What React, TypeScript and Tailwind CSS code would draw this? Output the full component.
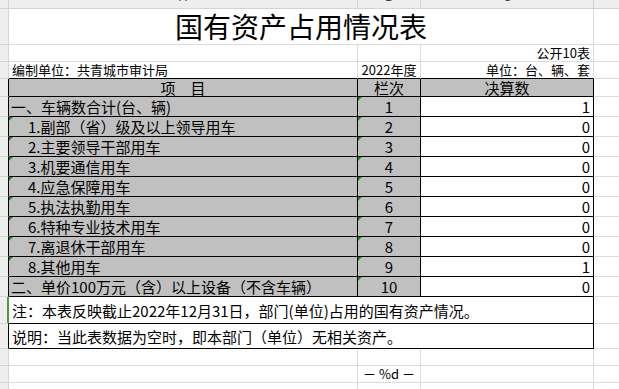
import React from "react";

const FONT = { fontFamily: '"Noto Sans CJK SC", "Noto Sans", sans-serif' };

function Tri() {
  return (
    <svg className="absolute left-0 top-0" width="4" height="4" viewBox="0 0 4 4">
      <polygon points="0,0 4,0 0,4" fill="#1f8a1f" />
    </svg>
  );
}

const GRID = "border-[#dcdcdc]";

function RowHeader({ black }: { black?: boolean }) {
  return (
    <div
      className={`w-[9px] shrink-0 h-full bg-[#eeeeee] border-b border-b-[#d6d6d6] border-r ${
        black ? "border-r-black" : "border-r-[#d6d6d6]"
      }`}
    />
  );
}

function DCell() {
  return <div className={`flex-1 h-full border-b ${GRID}`} />;
}

type DataRow = { label: string; indent: boolean; no: string; val: string; tri: boolean };

const rows: DataRow[] = [
  { label: "一、车辆数合计(台、辆)", indent: false, no: "1", val: "1", tri: false },
  { label: "1.副部（省）级及以上领导用车", indent: true, no: "2", val: "0", tri: true },
  { label: "2.主要领导干部用车", indent: true, no: "3", val: "0", tri: true },
  { label: "3.机要通信用车", indent: true, no: "4", val: "0", tri: true },
  { label: "4.应急保障用车", indent: true, no: "5", val: "0", tri: true },
  { label: "5.执法执勤用车", indent: true, no: "6", val: "0", tri: true },
  { label: "6.特种专业技术用车", indent: true, no: "7", val: "0", tri: true },
  { label: "7.离退休干部用车", indent: true, no: "8", val: "0", tri: true },
  { label: "8.其他用车", indent: true, no: "9", val: "1", tri: true },
  { label: "二、单价100万元（含）以上设备（不含车辆）", indent: false, no: "10", val: "0", tri: false },
];

export default function App() {
  return (
    <div className="w-[619px] h-[389px] overflow-hidden bg-white text-black" style={FONT}>
      {/* column header */}
      <div className="flex h-[9px] bg-[#eeeeee] border-b border-[#d3d3d3] overflow-hidden">
        <div className="w-[9px] shrink-0 border-r border-[#d3d3d3]" />
        <div className="w-[349px] shrink-0 border-r border-[#d3d3d3] relative overflow-hidden">
          <span className="absolute left-1/2 -translate-x-1/2 -top-[11px] text-[13px] leading-[14px] text-[#444]">A</span>
        </div>
        <div className="w-[63px] shrink-0 border-r border-[#d3d3d3] relative overflow-hidden">
          <span className="absolute left-1/2 -translate-x-1/2 -top-[11px] text-[13px] leading-[14px] text-[#444]">B</span>
        </div>
        <div className="w-[173px] shrink-0 border-r border-[#d3d3d3] relative overflow-hidden">
          <span className="absolute left-1/2 -translate-x-1/2 -top-[11px] text-[13px] leading-[14px] text-[#444]">C</span>
        </div>
        <div className="flex-1" />
      </div>

      {/* title */}
      <div className="flex h-[36px]">
        <RowHeader />
        <div className={`w-[585px] shrink-0 h-full border-r border-b ${GRID} flex items-center justify-center text-[28px] leading-none pb-[1px]`}>
          国有资产占用情况表
        </div>
        <DCell />
      </div>

      {/* 公开10表 */}
      <div className="flex h-[17px] text-[13px] leading-[14px]">
        <RowHeader />
        <div className={`w-[349px] shrink-0 h-full border-r border-b ${GRID}`} />
        <div className={`w-[63px] shrink-0 h-full border-r border-b ${GRID}`} />
        <div className={`w-[173px] shrink-0 h-full border-r border-b ${GRID} flex items-center justify-end pr-[3px]`}>
          公开10表
        </div>
        <DCell />
      </div>

      {/* 编制单位 */}
      <div className="flex h-[17px] text-[13px] leading-[14px]">
        <RowHeader />
        <div className={`w-[349px] shrink-0 h-full border-r ${GRID} border-b border-b-black flex items-center pl-[3px]`}>
          编制单位：共青城市审计局
        </div>
        <div className={`w-[63px] shrink-0 h-full border-r ${GRID} border-b border-b-black flex items-center justify-center`}>
          2022年度
        </div>
        <div className={`w-[173px] shrink-0 h-full border-r ${GRID} border-b border-b-black flex items-center justify-end pr-[3px]`}>
          单位：台、辆、套
        </div>
        <DCell />
      </div>

      {/* header row */}
      <div className="flex h-[18px] text-[15px] leading-[16px]">
        <RowHeader black />
        <div className="w-[349px] shrink-0 h-full border-r border-b border-black bg-[#c0c0c0] flex items-center justify-center">
          项　目
        </div>
        <div className="w-[63px] shrink-0 h-full border-r border-b border-black bg-[#c0c0c0] flex items-center justify-center">
          栏次
        </div>
        <div className="w-[173px] shrink-0 h-full border-r border-b border-black bg-[#c0c0c0] flex items-center justify-center">
          决算数
        </div>
        <DCell />
      </div>

      {rows.map((r) => (
        <div key={r.no} className="flex h-[20px] text-[15px] leading-none">
          <RowHeader black />
          <div
            className={`relative w-[349px] shrink-0 h-full border-r border-b border-black bg-[#c0c0c0] flex items-center whitespace-nowrap overflow-hidden ${
              r.indent ? "pl-[19px]" : "pl-[2px]"
            }`}
          >
            {r.tri && <Tri />}
            {r.label}
          </div>
          <div className="relative w-[63px] shrink-0 h-full border-r border-b border-black bg-[#c0c0c0] flex items-center justify-center">
            <Tri />
            {r.no}
          </div>
          <div className="w-[173px] shrink-0 h-full border-r border-b border-black bg-white flex items-center justify-end pr-[3px]">
            {r.val}
          </div>
          <DCell />
        </div>
      ))}

      {/* note rows */}
      <div className="relative flex h-[27px] text-[15px] leading-none">
        <RowHeader black />
        <div className="w-[585px] shrink-0 h-full border-r border-b border-black flex items-center pl-[3px] whitespace-nowrap">
          注：本表反映截止2022年12月31日，部门(单位)占用的国有资产情况。
        </div>
        <DCell />
        <div className="absolute left-[7px] top-0 w-[2px] h-[26px] bg-[#4f9a34]" />
      </div>
      <div className="flex h-[25px] text-[15px] leading-none">
        <RowHeader black />
        <div className="w-[585px] shrink-0 h-full border-r border-b border-black flex items-center pl-[3px] whitespace-nowrap">
          说明：当此表数据为空时，即本部门（单位）无相关资产。
        </div>
        <DCell />
      </div>

      {/* empty rows */}
      {[0, 1, 2].map((i) => (
        <div key={i} className="flex h-[17px] text-[13px] leading-[14px]">
          <RowHeader />
          <div className={`w-[349px] shrink-0 h-full border-r border-b ${GRID}`} />
          <div className={`w-[63px] shrink-0 h-full border-r border-b ${GRID} flex items-center justify-center whitespace-nowrap`}>
            {i === 1 ? "－ %d －" : ""}
          </div>
          <div className={`w-[173px] shrink-0 h-full border-r border-b ${GRID}`} />
          <DCell />
        </div>
      ))}
    </div>
  );
}
